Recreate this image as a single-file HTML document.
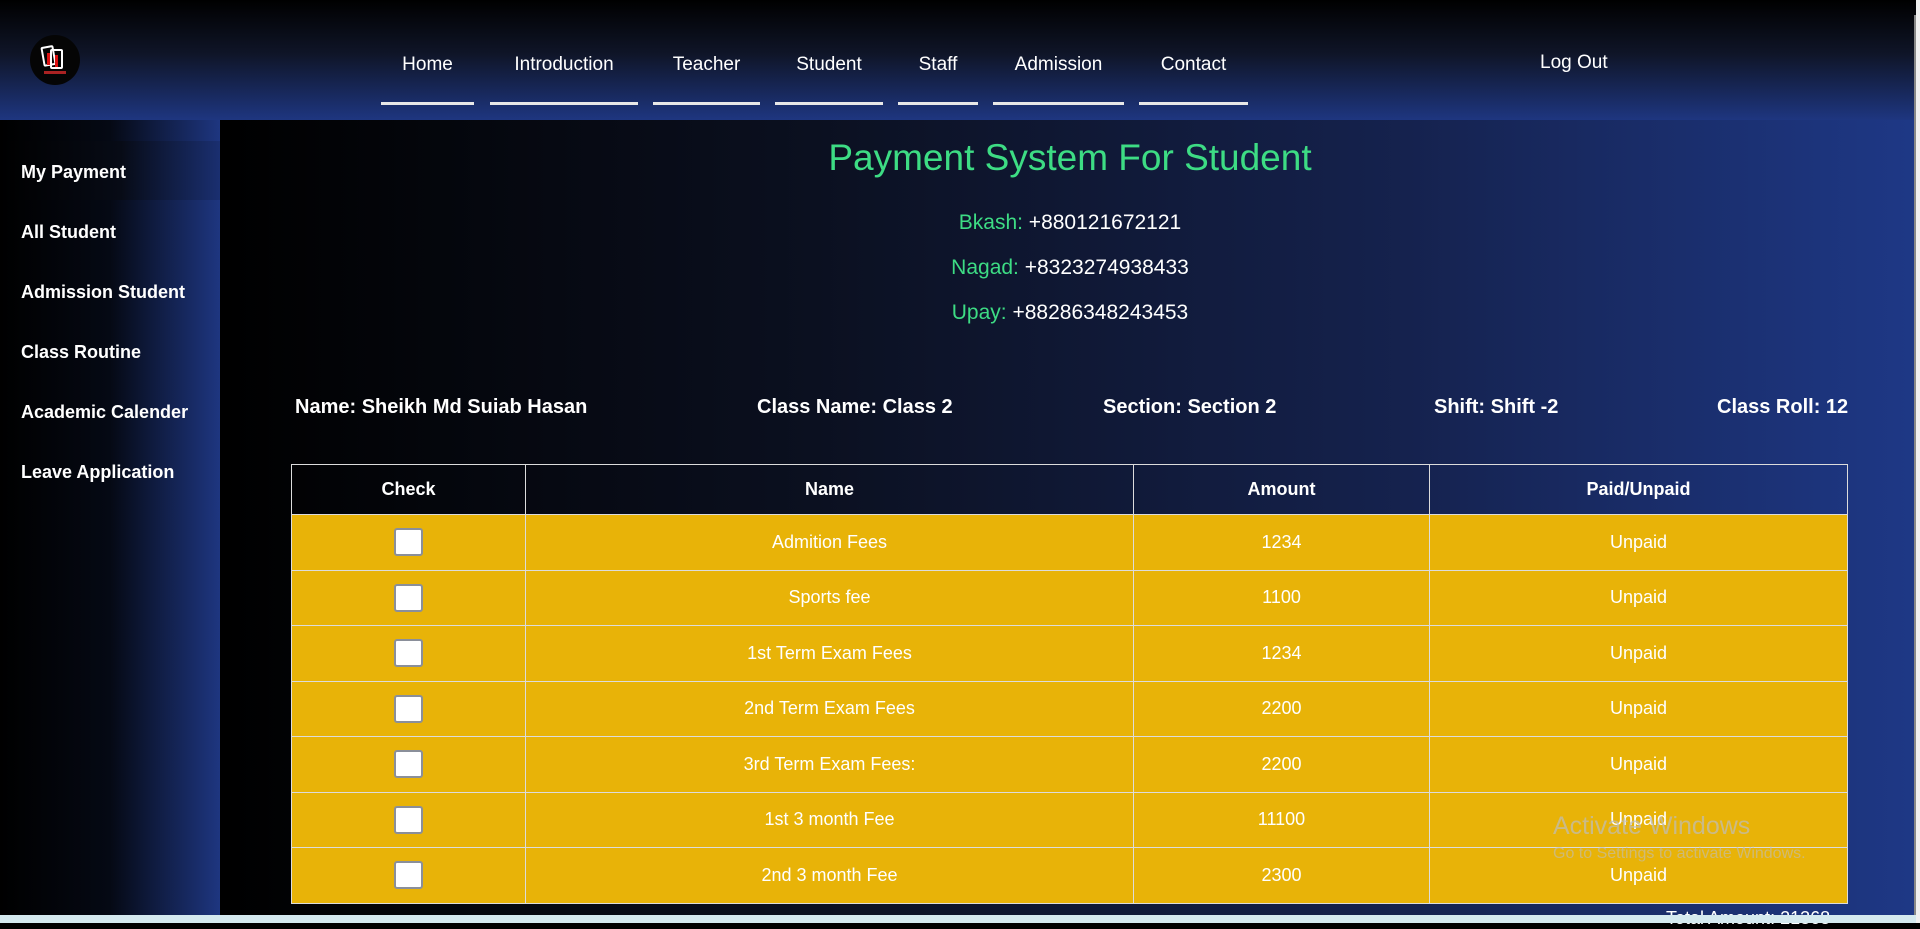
<!DOCTYPE html>
<html><head><meta charset="utf-8"><style>
*{margin:0;padding:0;box-sizing:border-box}
body{width:1920px;height:923px;overflow:hidden;background:#000;font-family:"Liberation Sans",sans-serif;color:#fff;position:relative}
.hdr{position:absolute;left:0;top:0;width:1920px;height:120px;background:linear-gradient(180deg,#000 0%,#0f1528 45%,#1e3680 100%)}
.logo{position:absolute;left:30px;top:35px;width:50px;height:50px;border-radius:50%;background:#050505}
.nav a{position:absolute;top:54px;font-size:19px;color:#fff;text-align:center;height:51px;border-bottom:3px solid #e8e8e8}
.side{position:absolute;left:0;top:120px;width:220px;height:795px;background:linear-gradient(90deg,#000 0%,#050914 50%,#1e3680 100%)}
.side div{position:absolute;left:21px;font-size:18px;font-weight:bold}
.main{position:absolute;left:220px;top:120px;width:1697px;height:795px;background:linear-gradient(90deg,#000 0%,#0b1020 35%,#15224e 70%,#1e3886 100%)}
.c{position:absolute;text-align:center;width:1920px;left:110px}
.g{color:#3ddc84}
.info{position:absolute;top:396px;font-size:20px;font-weight:bold}
table{position:absolute;left:291px;top:464px;width:1557px;border-collapse:collapse;font-size:18px}
td,th{border:1px solid #dcdcdc;text-align:center}
th{height:50px;background:transparent;font-weight:bold}
td{height:55.5px;background:#e8b308}
.cb{display:inline-block;width:29px;height:28px;background:#fff;border:2px solid #8a8f9a;border-radius:3px;vertical-align:middle}
</style></head><body>
<div class="hdr">
<div class="logo"><svg width="50" height="50"><rect x="13" y="12" width="11" height="18" rx="1" fill="none" stroke="#fff" stroke-width="2" transform="rotate(-10 18 21)"/><rect x="21" y="15" width="11" height="18" rx="1" fill="none" stroke="#fff" stroke-width="2"/><rect x="17" y="18" width="3" height="12" fill="#d11"/><rect x="25" y="20" width="3" height="12" fill="#d11"/><rect x="14" y="36" width="22" height="3" fill="#a22"/></svg></div>
<div class="nav">
<a style="left:381px;width:93px">Home</a>
<a style="left:490px;width:148px">Introduction</a>
<a style="left:653px;width:107px">Teacher</a>
<a style="left:775px;width:108px">Student</a>
<a style="left:898px;width:80px">Staff</a>
<a style="left:993px;width:131px">Admission</a>
<a style="left:1139px;width:109px">Contact</a>
</div>
<div style="position:absolute;left:1540px;top:52px;font-size:19px">Log Out</div>
</div>
<div class="side">
<div style="left:0;top:21px;width:220px;height:59px;background:linear-gradient(90deg,#000 0%,#070b16 55%,#1a2f70 100%)"></div>
<div style="top:42px">My Payment</div>
<div style="top:102px">All Student</div>
<div style="top:162px">Admission Student</div>
<div style="top:222px">Class Routine</div>
<div style="top:282px">Academic Calender</div>
<div style="top:342px">Leave Application</div>
</div>
<div class="main"></div>
<div class="c g" style="top:137px;font-size:37px">Payment System For Student</div>
<div class="c" style="top:211px;font-size:21px"><span class="g">Bkash:</span> +880121672121</div>
<div class="c" style="top:256px;font-size:21px"><span class="g">Nagad:</span> +8323274938433</div>
<div class="c" style="top:301px;font-size:21px"><span class="g">Upay:</span> +88286348243453</div>
<div class="info" style="left:295px">Name: Sheikh Md Suiab Hasan</div>
<div class="info" style="left:757px">Class Name: Class 2</div>
<div class="info" style="left:1103px">Section: Section 2</div>
<div class="info" style="left:1434px">Shift: Shift -2</div>
<div class="info" style="left:1717px">Class Roll: 12</div>
<table>
<tr><th style="width:234px">Check</th><th style="width:608px">Name</th><th style="width:296px">Amount</th><th>Paid/Unpaid</th></tr>
<tr><td><span class="cb"></span></td><td>Admition Fees</td><td>1234</td><td>Unpaid</td></tr>
<tr><td><span class="cb"></span></td><td>Sports fee</td><td>1100</td><td>Unpaid</td></tr>
<tr><td><span class="cb"></span></td><td>1st Term Exam Fees</td><td>1234</td><td>Unpaid</td></tr>
<tr><td><span class="cb"></span></td><td>2nd Term Exam Fees</td><td>2200</td><td>Unpaid</td></tr>
<tr><td><span class="cb"></span></td><td>3rd Term Exam Fees:</td><td>2200</td><td>Unpaid</td></tr>
<tr><td><span class="cb"></span></td><td>1st 3 month Fee</td><td>11100</td><td>Unpaid</td></tr>
<tr><td><span class="cb"></span></td><td>2nd 3 month Fee</td><td>2300</td><td>Unpaid</td></tr>
</table>
<div style="position:absolute;left:1553px;top:812px;font-size:25px;color:rgba(190,190,190,.7)">Activate Windows</div>
<div style="position:absolute;left:1553px;top:845px;font-size:16px;color:rgba(190,190,190,.6)">Go to Settings to activate Windows.</div>
<div style="position:absolute;left:1666px;top:908px;font-size:18px">Total Amount: 21368</div>
<div style="position:absolute;left:0;top:915px;width:1920px;height:8px;background:#d4e9ef"></div>
<div style="position:absolute;left:1914px;top:15px;width:2px;height:900px;background:#888"></div>
<div style="position:absolute;left:1916px;top:0;width:4px;height:923px;background:#f0f0f0"></div>
</body></html>
